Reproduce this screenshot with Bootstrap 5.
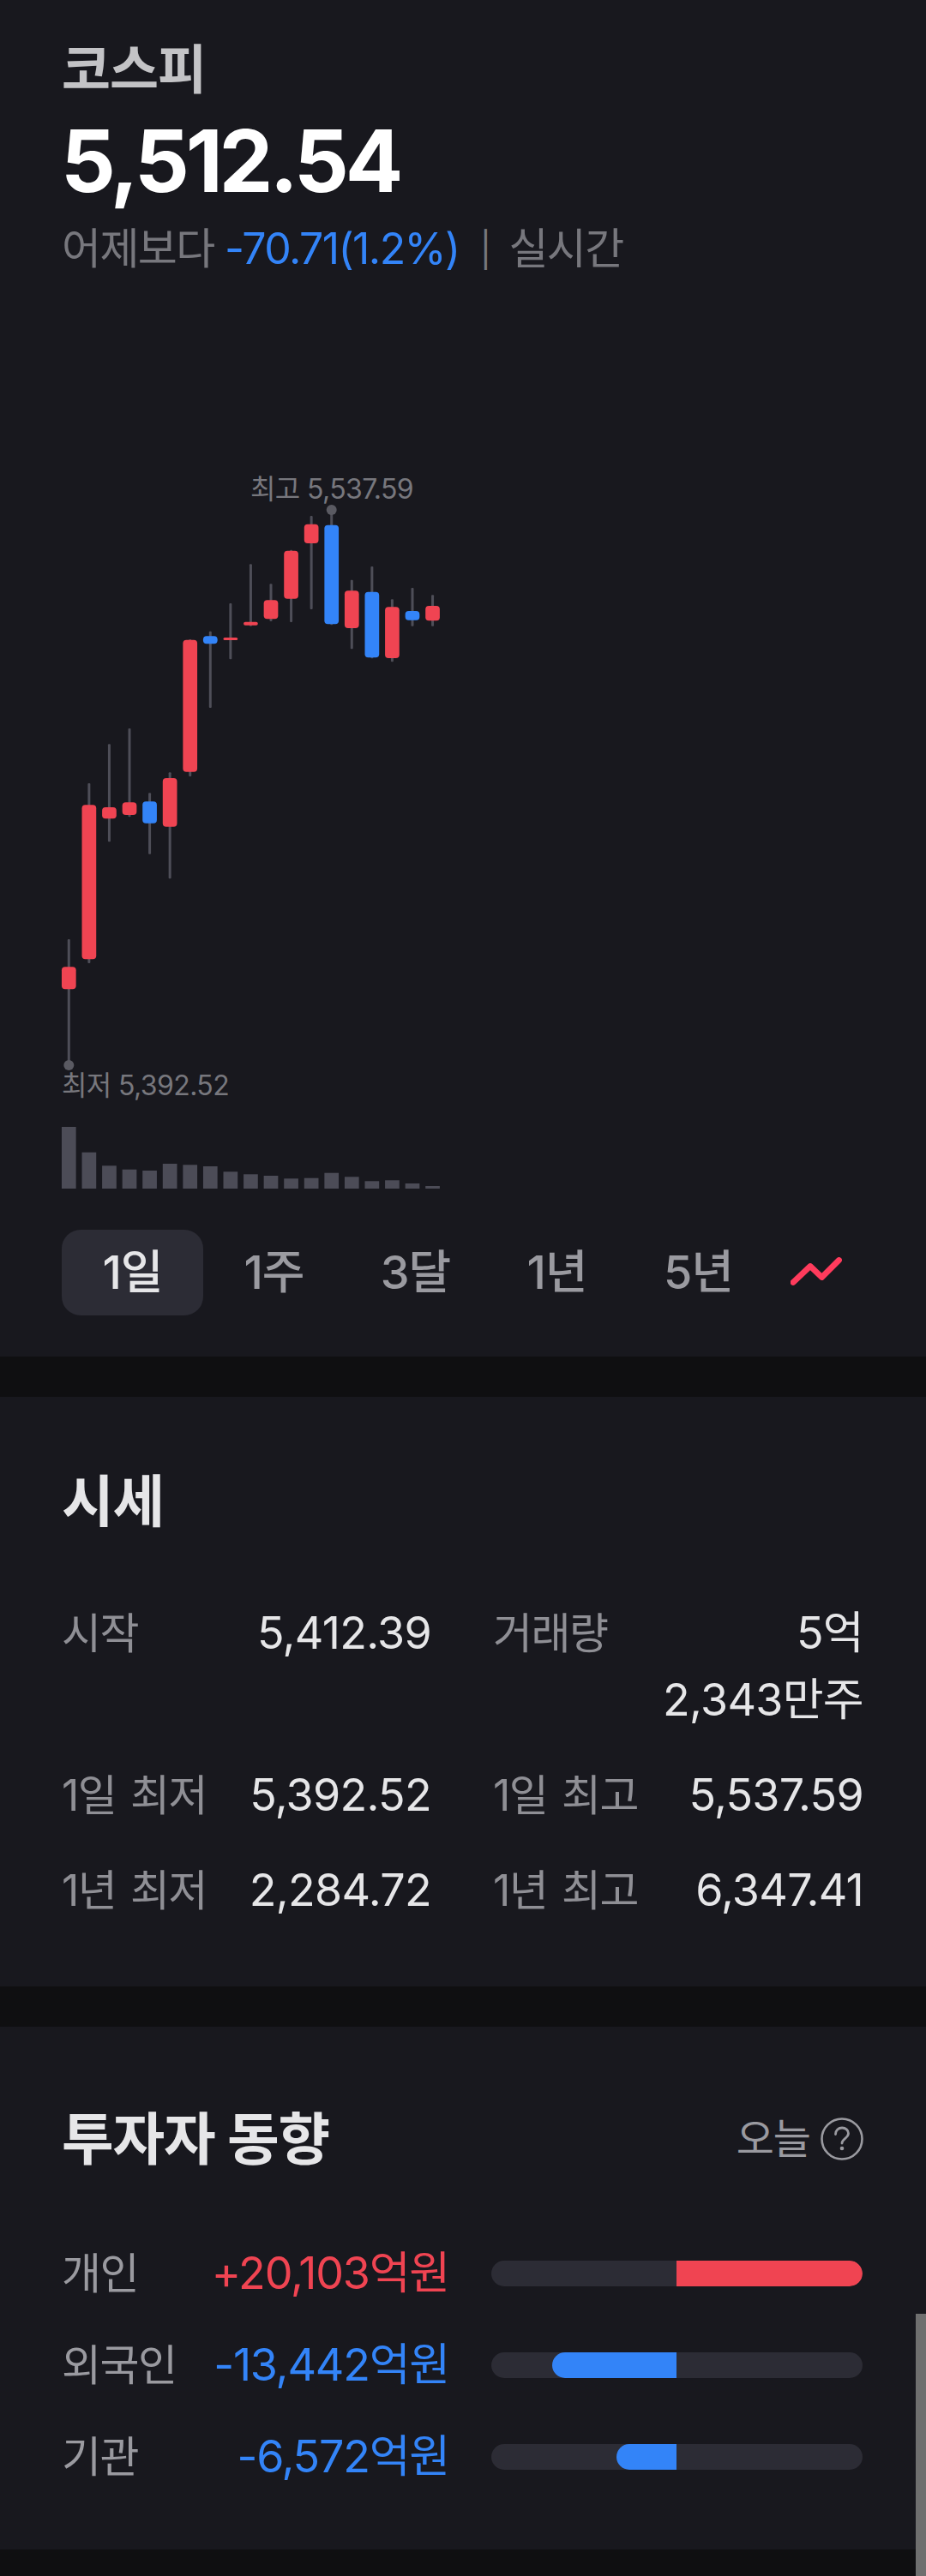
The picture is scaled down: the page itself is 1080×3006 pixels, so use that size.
<!DOCTYPE html>
<html lang="ko">
<head>
    <meta charset="UTF-8">
    <meta name="viewport" content="width=device-width, initial-scale=1.0">
    <title>코스피</title>
    <link href="https://cdn.jsdelivr.net/npm/bootstrap@5.3.0/dist/css/bootstrap.min.css" rel="stylesheet">
    <style>
        body { background: #0f0f11; font-family: Inter, "Noto Sans CJK KR", sans-serif; color: #e6e6e8; }
        .panel { background: #18181e; padding-left: 72px; padding-right: 74px; }
        .panel + .panel { margin-top: 47px; }
        .panel-hero { padding-top: 43px; padding-bottom: 48px; }
        .panel-stats { padding-top: 80px; padding-bottom: 73px; }
        .panel-flow { padding-top: 89px; padding-bottom: 69px; }
        .index-name { font-size: 62px; line-height: 78px; font-weight: 600; color: #c3c3c6; letter-spacing: -1px; }
        .index-price { font-size: 100px; line-height: 110px; font-weight: 700; color: #fff; margin-top: 12px; margin-left: -1px; letter-spacing: -4.2px; }
        .index-sub { font-size: 50px; line-height: 78px; color: #77777d; margin-top: 8px; letter-spacing: -1.6px; white-space: nowrap; }
        .index-sep { font-size: 40px; line-height: 0; margin: 0 22px 0 24px; vertical-align: 2px; }
        .up { color: #f04452; }
        .down { color: #3384f8; }
        .chart-box { display: block; margin: 211px 0 0 -72px; }
        .chart-label { font-size: 32px; fill: #77777d; letter-spacing: -0.6px; font-family: Inter, "Noto Sans CJK KR", sans-serif; }
        .range-tabs { margin-top: 40px; height: 100px; }
        .range-tab { --bs-btn-padding-x: 0; --bs-btn-padding-y: 0; --bs-btn-border-width: 0; --bs-btn-color: #9a9aa0; --bs-btn-font-size: 54px; --bs-btn-font-weight: 500; --bs-btn-line-height: 100px; --bs-btn-border-radius: 22px; width: 165px; height: 100px; letter-spacing: -1px; }
        .range-tab.on { background: #2c2c35; color: #e6e6e8; }
        .chart-toggle { margin-left: 25px; }
        .section-title { font-size: 66px; line-height: 84px; font-weight: 700; color: #e6e6e8; letter-spacing: -1.2px; margin: 0; }
        .stat-grid { display: grid; grid-template-columns: 431px 432px; column-gap: 72px; row-gap: 33px; margin-top: 73px; }
        .stat-item { font-size: 50px; line-height: 78px; letter-spacing: -1.5px; word-spacing: 4px; }
        .stat-label { color: #8f8f95; white-space: nowrap; }
        .stat-value { color: #e6e6e8; font-size: 52px; letter-spacing: -0.7px; }
        .flow-when { font-size: 48px; line-height: 84px; color: #9a9aa0; gap: 12px; letter-spacing: -1px; margin-right: -1px; }
        .flow-list { margin-top: 76px; gap: 29px; }
        .flow-row { height: 78px; font-size: 50px; line-height: 78px; letter-spacing: -1.5px; }
        .flow-label { width: 150px; color: #9a9aa0; }
        .flow-amount { width: 303px; font-size: 52px; letter-spacing: -1.2px; }
        .flow-track { width: 434px; height: 30px; margin-left: 49px; border-radius: 15px; background: #2c2c35; overflow: hidden; }
        .flow-half { width: 50%; }
        .fill-up { background: #f04452; border-radius: 0 15px 15px 0; }
        .fill-down { background: #3384f8; border-radius: 15px 0 0 15px; }
        .page-scroll { position: fixed; right: 0; bottom: 0; width: 12px; height: 306px; background: #6f6f6f; }
    </style>
</head>
<body>
    <!-- Index header + chart -->
    <section class="panel panel-hero">
        <div class="index-name">코스피</div>
        <div class="index-price">5,512.54</div>
        <div class="index-sub">어제보다 <span class="down">-70.71(1.2%)</span><span class="index-sep">|</span>실시간</div>

        <svg id="chart" class="chart-box" width="1080" height="855" viewBox="0 540 1080 855" xmlns="http://www.w3.org/2000/svg">
            <text class="chart-label" x="292" y="582">최고 5,537.59</text>
            <text class="chart-label" x="72" y="1278">최저 5,392.52</text>
        </svg>

        <div class="range-tabs d-flex align-items-center">
            <button type="button" class="btn range-tab on">1일</button>
            <button type="button" class="btn range-tab">1주</button>
            <button type="button" class="btn range-tab">3달</button>
            <button type="button" class="btn range-tab">1년</button>
            <button type="button" class="btn range-tab">5년</button>
            <svg class="chart-toggle" width="60" height="36" viewBox="922 1468 60 36" xmlns="http://www.w3.org/2000/svg">
                <path d="M925 1497.5 L945 1478.5 L958.5 1491.5 L978.5 1471.5" fill="none" stroke="#ff3b5c" stroke-width="6.8" stroke-linecap="round" stroke-linejoin="round"/>
            </svg>
        </div>
    </section>

    <!-- Quote -->
    <section class="panel panel-stats">
        <h2 class="section-title">시세</h2>
        <div class="stat-grid">
            <div class="stat-item d-flex justify-content-between"><span class="stat-label">시작</span><span class="stat-value text-end">5,412.39</span></div>
            <div class="stat-item d-flex justify-content-between"><span class="stat-label me-4">거래량</span><span class="stat-value text-end">5억<br>2,343만주</span></div>
            <div class="stat-item d-flex justify-content-between"><span class="stat-label">1일 최저</span><span class="stat-value text-end">5,392.52</span></div>
            <div class="stat-item d-flex justify-content-between"><span class="stat-label">1일 최고</span><span class="stat-value text-end">5,537.59</span></div>
            <div class="stat-item d-flex justify-content-between"><span class="stat-label">1년 최저</span><span class="stat-value text-end">2,284.72</span></div>
            <div class="stat-item d-flex justify-content-between"><span class="stat-label">1년 최고</span><span class="stat-value text-end">6,347.41</span></div>
        </div>
    </section>

    <!-- Investors -->
    <section class="panel panel-flow">
        <div class="d-flex justify-content-between align-items-center">
            <h2 class="section-title">투자자 동향</h2>
            <div class="flow-when d-flex align-items-center">
                <span>오늘</span>
                <svg width="50" height="50" viewBox="0 0 50 50" xmlns="http://www.w3.org/2000/svg">
                    <circle cx="25" cy="25" r="23.5" fill="none" stroke="#9a9aa0" stroke-width="2.6"/>
                    <path d="M17.5 19.5c0-4.5 3.4-7.5 7.6-7.5s7.4 2.8 7.4 6.6c0 5.5-7.5 5.9-7.5 11.4" fill="none" stroke="#9a9aa0" stroke-width="2.8" stroke-linecap="round"/>
                    <circle cx="25" cy="36" r="2.3" fill="#9a9aa0"/>
                </svg>
            </div>
        </div>
        <div class="flow-list d-flex flex-column">
            <div class="flow-row d-flex align-items-center">
                <span class="flow-label">개인</span>
                <span class="flow-amount up text-end">+20,103억원</span>
                <div class="flow-track d-flex">
                    <div class="flow-half d-flex justify-content-end"></div>
                    <div class="flow-half d-flex"><div class="fill-up" style="width:100%"></div></div>
                </div>
            </div>
            <div class="flow-row d-flex align-items-center">
                <span class="flow-label">외국인</span>
                <span class="flow-amount down text-end">-13,442억원</span>
                <div class="flow-track d-flex">
                    <div class="flow-half d-flex justify-content-end"><div class="fill-down" style="width:67%"></div></div>
                    <div class="flow-half d-flex"></div>
                </div>
            </div>
            <div class="flow-row d-flex align-items-center">
                <span class="flow-label">기관</span>
                <span class="flow-amount down text-end">-6,572억원</span>
                <div class="flow-track d-flex">
                    <div class="flow-half d-flex justify-content-end"><div class="fill-down" style="width:32.5%"></div></div>
                    <div class="flow-half d-flex"></div>
                </div>
            </div>
        </div>
    </section>

    <div class="page-scroll"></div>

    <script src="https://cdn.jsdelivr.net/npm/bootstrap@5.3.0/dist/js/bootstrap.bundle.min.js"></script>
    <script>
        // [wick top, wick bottom, body top, body bottom, up?] in page pixels
        const candles = [
            [1096, 1243, 1128.3, 1154.3, 1],
            [914, 1124, 939.3, 1119.3, 1],
            [868.3, 982.3, 942, 955.3, 1],
            [850, 953.3, 936.3, 951, 1],
            [925.3, 996.7, 935.3, 960.7, 0],
            [901.3, 1025.3, 908, 964.7, 1],
            [746, 906, 746.7, 900.7, 1],
            [736.7, 826, 742.3, 751.3, 0],
            [704, 769.3, 744, 747, 1],
            [658.3, 730.7, 725.7, 729.7, 1],
            [681.3, 725, 700.3, 722.3, 1],
            [641.7, 726, 642.7, 698.7, 1],
            [602, 711, 611.7, 634, 1],
            [595, 729.3, 612.7, 728.3, 0],
            [676.7, 757.3, 689.3, 733, 1],
            [661, 768.3, 690.7, 767.3, 0],
            [699.3, 772.3, 708.3, 768, 1],
            [686, 730.7, 713, 723.7, 0],
            [694.3, 730.7, 707, 724.3, 1]
        ];
        const volumes = [72, 42.3, 26.7, 22.3, 21, 29, 27.7, 26, 19.7, 16.7, 15, 11.7, 12.3, 18.3, 13.7, 8.7, 9.7, 6, 3];
        const pitch = 23.57, firstX = 80.3, barW = 16.7, volBase = 1387;

        let marks = '';
        candles.forEach((c, i) => {
            const x = firstX + pitch * i;
            marks += `<rect x="${x - 1.5}" y="${c[0]}" width="3" height="${c[1] - c[0]}" rx="1" fill="#4e4e58"/>`;
            const h = c[3] - c[2];
            marks += `<rect x="${x - barW / 2}" y="${c[2]}" width="${barW}" height="${h}" rx="${Math.min(4, h / 2)}" fill="${c[4] ? '#f04452' : '#3384f8'}"/>`;
            marks += `<rect x="${x - barW / 2}" y="${volBase - volumes[i]}" width="${barW}" height="${volumes[i]}" fill="#4c4c57"/>`;
        });
        // high / low dots
        marks += `<circle cx="${firstX + pitch * 13}" cy="595" r="6" fill="#5a5a62"/>`;
        marks += `<circle cx="${firstX}" cy="1243" r="6" fill="#5a5a62"/>`;
        document.getElementById('chart').insertAdjacentHTML('beforeend', marks);
    </script>
</body>
</html>
